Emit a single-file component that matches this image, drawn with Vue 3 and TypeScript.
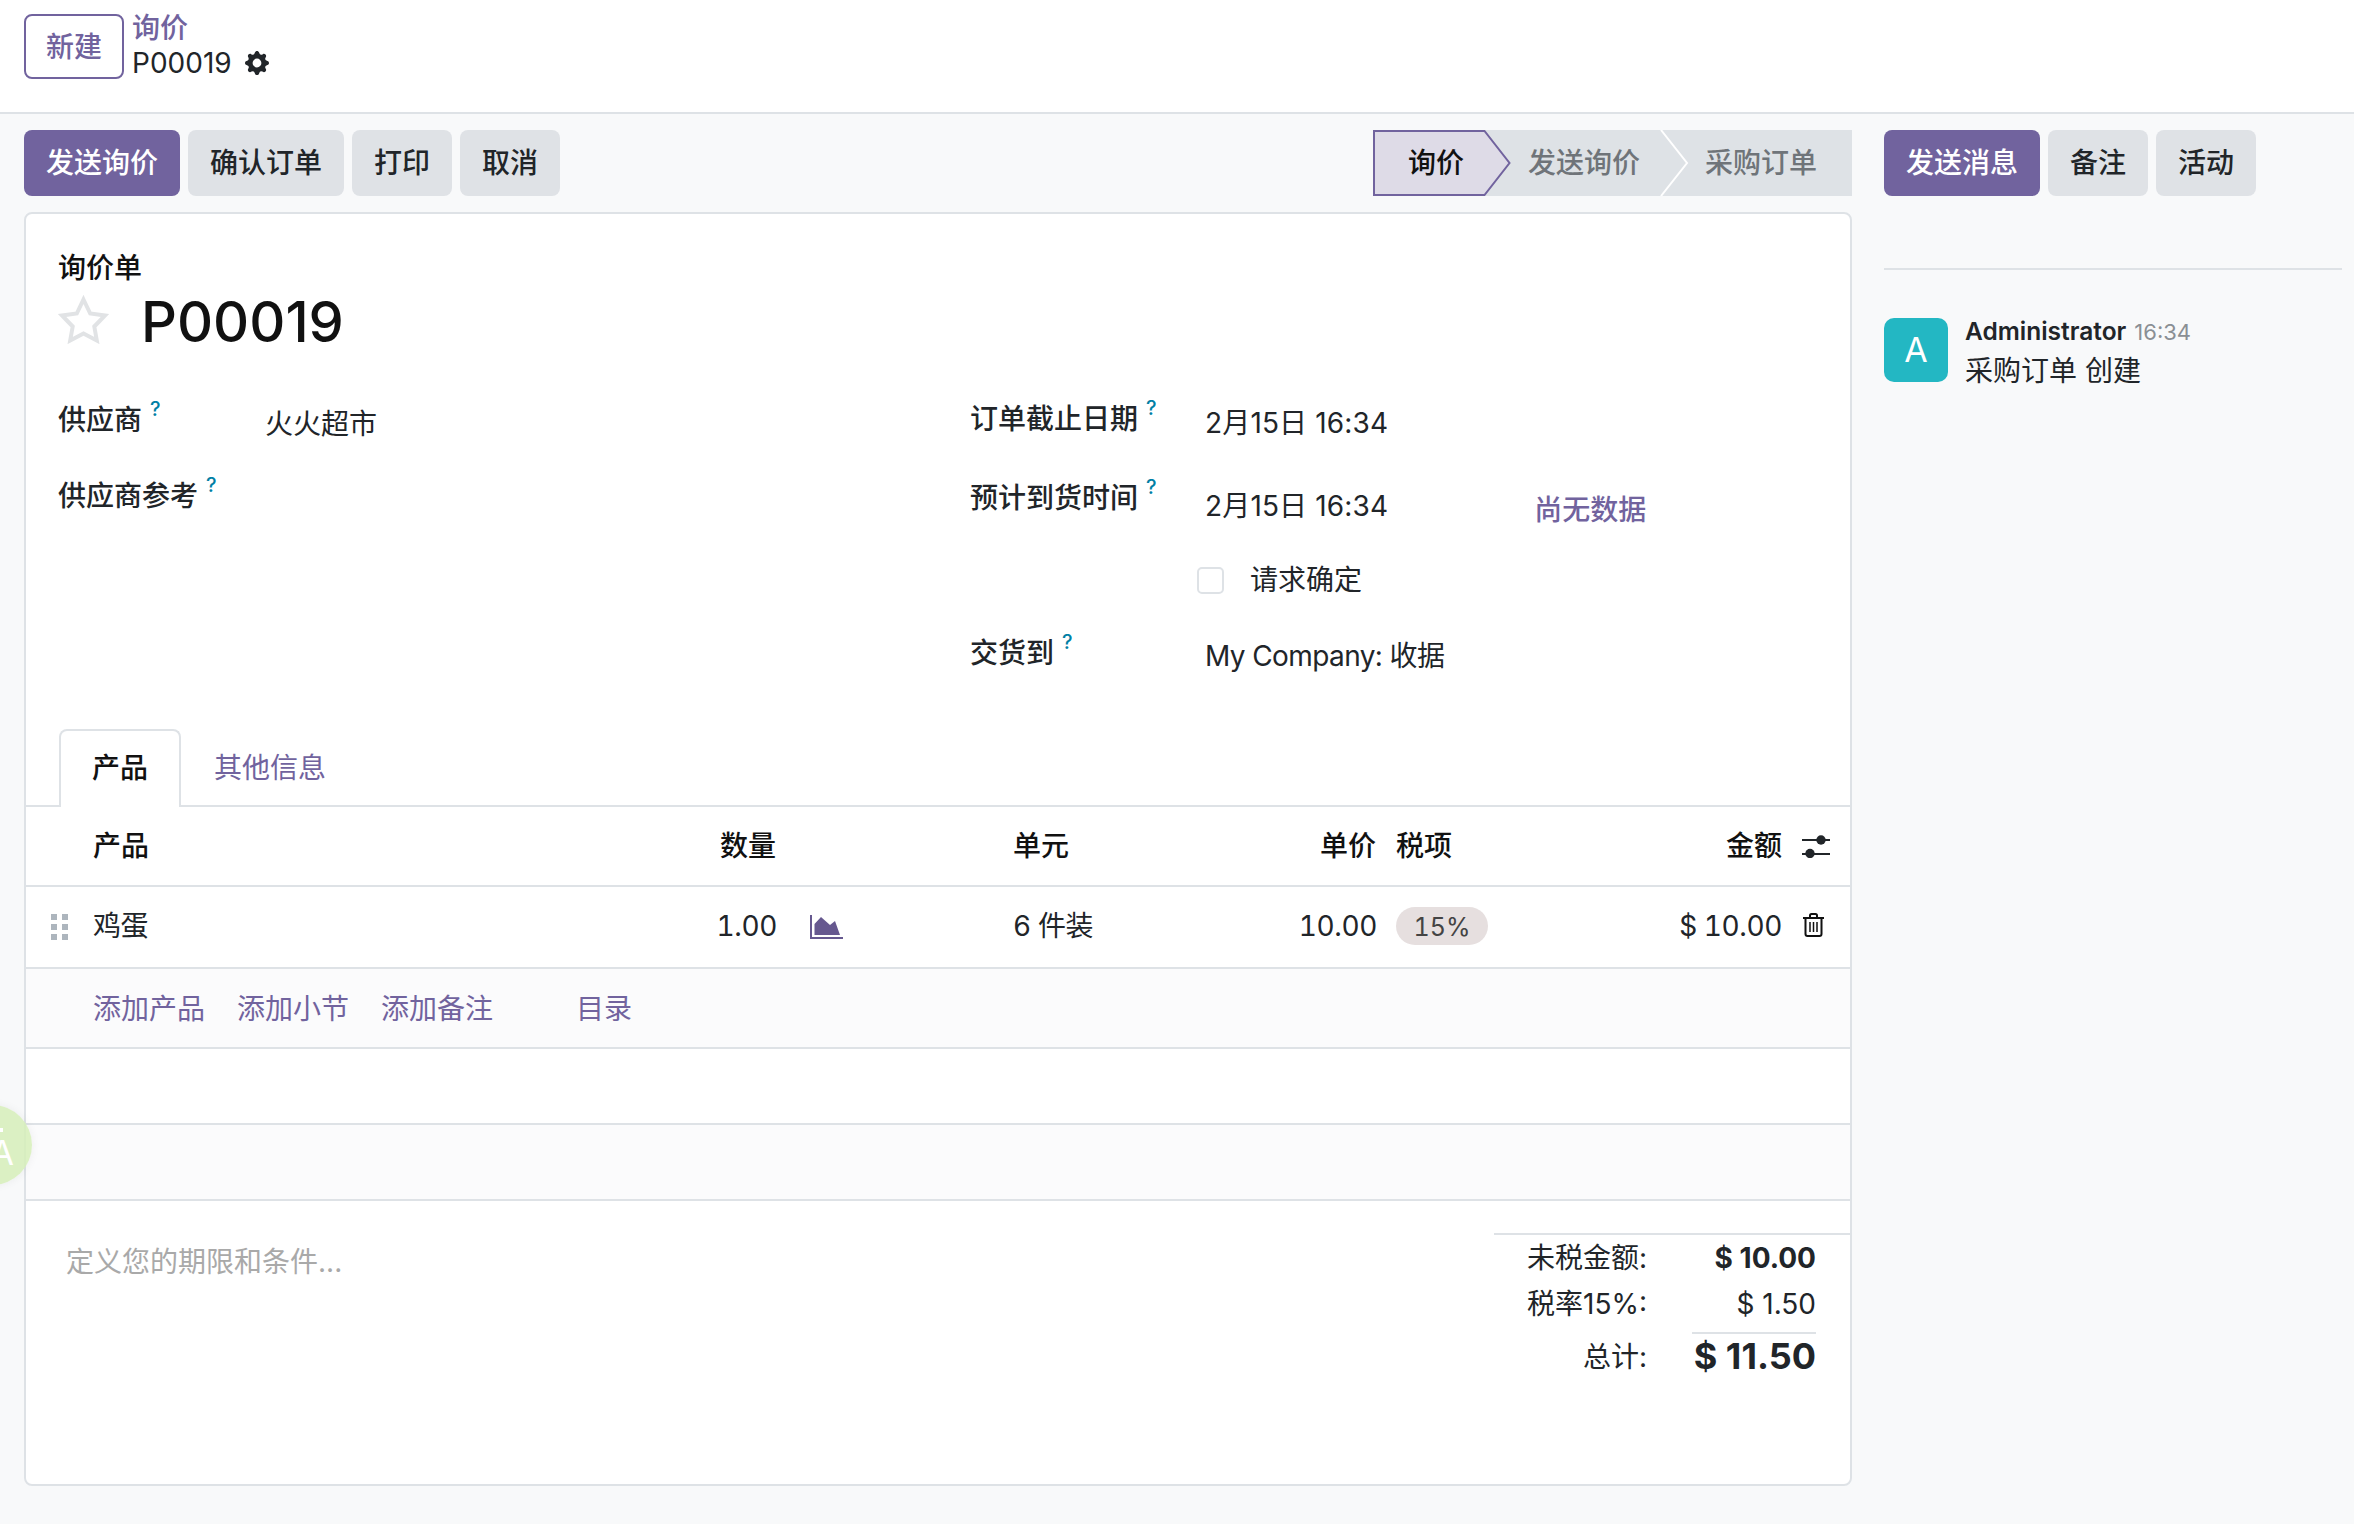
<script setup lang="ts">
const actions = [
  { label: '发送询价', primary: true },
  { label: '确认订单', primary: false },
  { label: '打印', primary: false },
  { label: '取消', primary: false }
]
const chatterActions = [
  { label: '发送消息', primary: true },
  { label: '备注', primary: false },
  { label: '活动', primary: false }
]
const addLinks = ['添加产品', '添加小节', '添加备注']
</script>

<template>
  <div class="app">
    <header class="topbar">
      <button class="btn btn-new">新建</button>
      <div class="crumbs">
        <a class="crumb-link">询价</a>
        <div class="crumb-current">
          <span>P00019</span>
          <svg class="gear" viewBox="0 0 16 16"><path fill-rule="evenodd" d="M9.405 1.05c-.413-1.4-2.397-1.4-2.81 0l-.1.34a1.464 1.464 0 0 1-2.105.872l-.31-.17c-1.283-.698-2.686.705-1.987 1.987l.169.311c.446.82.023 1.841-.872 2.105l-.34.1c-1.4.413-1.4 2.397 0 2.81l.34.1a1.464 1.464 0 0 1 .872 2.105l-.17.31c-.698 1.283.705 2.686 1.987 1.987l.311-.169a1.464 1.464 0 0 1 2.105.872l.1.34c.413 1.4 2.397 1.4 2.81 0l.1-.34a1.464 1.464 0 0 1 2.105-.872l.31.17c1.283.698 2.686-.705 1.987-1.987l-.169-.311a1.464 1.464 0 0 1 .872-2.105l.34-.1c1.4-.413 1.4-2.397 0-2.81l-.34-.1a1.464 1.464 0 0 1-.872-2.105l.17-.31c.698-1.283-.705-2.686-1.987-1.987l-.311.169a1.464 1.464 0 0 1-2.105-.872l-.1-.34zM8 10.93a2.929 2.929 0 1 1 0-5.86 2.929 2.929 0 0 1 0 5.858z" /></svg>
        </div>
      </div>
    </header>

    <main class="main">
      <section class="form-col">
        <div class="actions">
          <div class="btn-group">
            <button v-for="a in actions" :key="a.label" :class="['btn', a.primary ? 'btn-primary' : 'btn-secondary']">{{ a.label }}</button>
          </div>
          <div class="statusbar">
            <div class="step step-active">
              询价
              <svg class="arrow" viewBox="0 0 29 66"><path d="M0 1H2L27 33 2 65H0Z" fill="#dedbe7" stroke="none" /><path d="M0 1H1.500L26.500 33 1.500 65H0" fill="none" stroke="#71639e" stroke-width="2" /></svg>
            </div>
            <div class="step step-mid">
              发送询价
              <svg class="arrow" viewBox="0 0 29 66"><path d="M1 0 27 33 1 66" fill="none" stroke="#fff" stroke-width="2" /></svg>
            </div>
            <div class="step step-last">采购订单</div>
          </div>
        </div>

        <div class="sheet">
          <div class="head">
            <div class="doc-type">询价单</div>
            <div class="title-row">
              <svg class="star" viewBox="0 0 53 50"><path d="M26.500 5.500 33.200 19.500 48 21.500 37.300 32.500 39.800 46.500 26.500 39.500 13.200 46.500 15.700 32.500 5 21.500 19.800 19.500Z" fill="none" stroke="#e1e3e5" stroke-width="4" /></svg>
              <h1 class="title">P00019</h1>
            </div>
          </div>

          <div class="form-grid">
            <div class="form-left">
              <div class="field field-a">
                <label class="label">供应商<sup class="help">?</sup></label>
                <span class="value value-a">火火超市</span>
              </div>
              <div class="field">
                <label class="label">供应商参考<sup class="help">?</sup></label>
              </div>
            </div>
            <div class="form-right">
              <div class="field field-r1">
                <label class="label label-r">订单截止日期<sup class="help">?</sup></label>
                <span class="value value-r1">2月15日 16:34</span>
              </div>
              <div class="field field-r2">
                <label class="label label-r">预计到货时间<sup class="help">?</sup></label>
                <span class="value value-r2">2月15日 16:34</span>
                <a class="no-data">尚无数据</a>
              </div>
              <div class="field field-r3">
                <span class="checkbox"></span>
                <span class="check-label">请求确定</span>
              </div>
              <div class="field">
                <label class="label label-r">交货到<sup class="help">?</sup></label>
                <span class="value value-r4">My Company: 收据</span>
              </div>
            </div>
          </div>

          <div class="tabs">
            <div class="tab tab-active">产品</div>
            <a class="tab tab-link">其他信息</a>
          </div>

          <div class="table">
            <div class="cols row-head">
              <span class="c-product">产品</span>
              <span class="c-qty">数量</span>
              <span class="c-unit">单元</span>
              <span class="c-price">单价</span>
              <span class="c-tax">税项</span>
              <span class="c-amount">金额</span>
              <svg class="c-icon sliders" viewBox="0 0 28 23">
                <path d="M0 5H28M0 19H28" stroke="#212529" stroke-width="2" />
                <circle cx="19" cy="5" r="4.700" fill="#212529" />
                <circle cx="8" cy="18.500" r="4.700" fill="#212529" />
              </svg>
            </div>
            <div class="cols row-line">
              <span class="c-handle">
                <i v-for="n in 6" :key="n"></i>
              </span>
              <span class="c-product">鸡蛋</span>
              <span class="c-qty">1.00</span>
              <svg class="c-chart" viewBox="0 0 33 24">
                <path d="M0 0H2V22H33V24H0Z" fill="#66588f" />
                <path d="M4.500 20V9L11 2 20 10 25 6 30 20Z" fill="#66588f" />
              </svg>
              <span class="c-unit">6 件装</span>
              <span class="c-price">10.00</span>
              <span class="c-tax"><span class="badge">15%</span></span>
              <span class="c-amount">$ 10.00</span>
              <svg class="c-icon trash" viewBox="0 0 21 24">
                <path d="M7 4.500V2.500Q7 1 8.500 1H12.500Q14 1 14 2.500V4.500M0 5H21M2.500 5V21Q2.500 23 4.500 23H16.500Q18.500 23 18.500 21V5" fill="none" stroke="#111" stroke-width="2" />
                <path d="M7 9V19M10.500 9V19M14 9V19" stroke="#111" stroke-width="1.500" />
              </svg>
            </div>
            <div class="row-add">
              <a v-for="l in addLinks" :key="l" class="add-link">{{ l }}</a>
              <a class="add-link catalog">目录</a>
            </div>
            <div class="row-empty"></div>
            <div class="row-empty row-tint"></div>
          </div>

          <div class="footer">
            <div class="note">定义您的期限和条件...</div>
            <div class="totals">
              <span class="t-label">未税金额:</span>
              <strong class="t-value">$ 10.00</strong>
              <span class="t-label">税率15%:</span>
              <span class="t-value">$ 1.50</span>
              <span class="t-label t-grand-label">总计:</span>
              <strong class="t-value t-grand">$ 11.50</strong>
            </div>
          </div>
        </div>
      </section>

      <aside class="chatter">
        <div class="actions">
          <div class="btn-group">
            <button v-for="a in chatterActions" :key="a.label" :class="['btn', a.primary ? 'btn-primary' : 'btn-secondary']">{{ a.label }}</button>
          </div>
        </div>
        <div class="chatter-sep"></div>
        <div class="message">
          <div class="avatar">A</div>
          <div class="msg-body">
            <div class="msg-head"><span class="author">Administrator</span><span class="time">16:34</span></div>
            <div class="msg-text">采购订单 创建</div>
          </div>
        </div>
      </aside>
    </main>

    <div class="bubble"><span class="bubble-top"></span>A</div>
  </div>
</template>

<style>
html, body {
  background: #f8f9fa;
}
</style>

<style scoped>
.app {
  position: relative;
  min-height: 1524px;
  background: #f8f9fa;
  color: #212529;
  font-family: Inter, "Noto Sans CJK SC", sans-serif;
  font-size: 28px;
  line-height: 40px;
  overflow: hidden;
}

/* top */
.topbar {
  display: flex;
  align-items: flex-start;
  height: 98px;
  padding: 14px 0 0 24px;
  background: #fff;
  border-bottom: 2px solid #dee2e6;
}
.btn {
  display: inline-flex;
  align-items: center;
  justify-content: center;
  height: 66px;
  padding: 0 22px;
  border: none;
  border-radius: 8px;
  font: inherit;
  font-weight: 500;
  cursor: pointer;
}
.btn-new {
  width: 100px;
  height: 65px;
  padding: 0;
  background: #fff;
  color: #71639e;
  border: 2px solid #71639e;
}
.btn-primary {
  background: #71639e;
  color: #fff;
}
.btn-secondary {
  background: #dfe2e6;
  color: #212529;
}
.crumbs {
  margin-left: 8px;
  margin-top: -3px;
  display: flex;
  flex-direction: column;
}
.crumb-link {
  color: #71639e;
  height: 34px;
  line-height: 34px;
  font-weight: 500;
}
.crumb-current {
  display: flex;
  align-items: center;
  gap: 13px;
  height: 36px;
}
.gear {
  width: 24px;
  height: 24px;
  fill: #212529;
}

.main {
  display: flex;
  gap: 32px;
  padding: 0 12px 0 24px;
}
.form-col {
  width: 1828px;
  flex: none;
}
.actions {
  display: flex;
  justify-content: space-between;
  padding: 16px 0;
  height: 66px;
}
.btn-group {
  display: flex;
  gap: 8px;
}

/* statusbar */
.statusbar {
  display: flex;
  height: 66px;
  background: #dee2e6;
  color: #6f7479;
  font-weight: 500;
}
.step {
  position: relative;
  line-height: 66px;
}
.step-active {
  padding: 0 18px 0 33px;
  background: #dedbe7;
  color: #111;
  border: 2px solid #71639e;
  border-right: none;
  line-height: 62px;
  z-index: 2;
  width: 110px;
  box-sizing: border-box;
}
.step-mid {
  padding: 0 20px 0 45px;
  z-index: 1;
}
.step-last {
  padding: 0 35px 0 45px;
}
.arrow {
  position: absolute;
  left: 100%;
  top: 0;
  width: 29px;
  height: 66px;
}
.step-active .arrow {
  top: -2px;
}

/* sheet */
.sheet {
  height: 1274px;
  box-sizing: border-box;
  background: #fff;
  border: 2px solid #dee2e6;
  border-radius: 8px;
  overflow: hidden;
}
.head {
  padding: 34px 32px 0;
  height: 184px;
  box-sizing: border-box;
}
.doc-type {
  color: #111;
  font-weight: 500;
}
.title-row {
  display: flex;
  align-items: center;
  height: 68px;
}
.star {
  flex: none;
  width: 53px;
  height: 50px;
  margin: -7px 0 0 -1px;
}
.title {
  margin: 0 0 0 31px;
  color: #111;
  font-size: 56px;
  line-height: 68px;
  font-weight: 500;
}
.form-grid {
  display: flex;
  height: 331px;
  padding-left: 32px;
}
.form-left {
  width: 912px;
  padding-top: 1px;
}
.field {
  display: flex;
  align-items: flex-start;
}
.field-a {
  height: 76px;
}
.field-r1 {
  height: 79px;
}
.field-r2 {
  height: 82px;
}
.field-r3 {
  height: 73px;
}
.label {
  width: 207px;
  margin-top: 1px;
  font-weight: 500;
  flex: none;
  white-space: nowrap;
}
.label-r {
  width: 235px;
}
.help {
  margin-left: 8px;
  color: #0180a5;
  font-size: 20px;
  font-weight: 500;
  line-height: 0;
  vertical-align: 14px;
}
.value-a,
.value-r1 {
  margin-top: 5px;
}
.value-r1,
.value-r2 {
  letter-spacing: 0.15px;
}
.value-r2 {
  margin-top: 9px;
}
.value-r4 {
  margin-top: 4px;
  letter-spacing: -0.6px;
}
.no-data {
  margin-left: 146px;
  margin-top: 13px;
  color: #71639e;
  font-weight: 500;
  cursor: pointer;
}
.checkbox {
  width: 27px;
  height: 27px;
  margin: 8px 0 0 227px;
  box-sizing: border-box;
  border: 2px solid #dee2e6;
  border-radius: 5px;
  background: #fff;
}
.check-label {
  margin-top: 1px;
  margin-left: 26px;
}

/* tabs */
.tabs {
  display: flex;
  height: 76px;
  padding-left: 33px;
  border-bottom: 2px solid #dee2e6;
}
.tab {
  height: 76px;
  line-height: 78px;
  padding: 0 33px;
  box-sizing: border-box;
}
.tab-link {
  color: #71639e;
  cursor: pointer;
}
.tab-active {
  width: 122px;
  height: 78px;
  padding: 0 0 0 31px;
  border: 2px solid #dee2e6;
  border-bottom: none;
  border-radius: 8px 8px 0 0;
  background: #fff;
  color: #111;
  font-weight: 500;
  line-height: 74px;
}

/* table */
.cols {
  display: grid;
  grid-template-columns: 67px 684px 236px 200px 164px 19px 100px 286px 19px 1fr;
  align-items: center;
}
.cols > * {
  grid-row: 1;
}
.row-head {
  height: 78px;
  border-bottom: 2px solid #dee2e6;
  color: #111;
  font-weight: 500;
}
.row-head .c-qty,
.row-head .c-price {
  margin-right: 1px;
}
.row-line {
  height: 77px;
  padding-bottom: 3px;
  border-bottom: 2px solid #dee2e6;
  font-variant-numeric: tabular-nums;
  letter-spacing: -0.4px;
}
.c-handle {
  grid-column: 1;
  display: grid;
  grid-template-columns: 6px 6px;
  grid-auto-rows: 6px;
  column-gap: 5px;
  row-gap: 4px;
  margin: 2px 0 0 25px;
}
.c-handle i {
  background: #adb5bd;
}
.c-product {
  grid-column: 2;
  justify-self: start;
}
.c-qty {
  grid-column: 2;
  justify-self: end;
}
.c-chart {
  grid-column: 3;
  width: 33px;
  height: 24px;
  margin: 2px 0 0 33px;
}
.c-unit { grid-column: 4; }
.c-price { grid-column: 5; justify-self: end; }
.c-tax { grid-column: 7; white-space: nowrap; }
.c-amount { grid-column: 8; justify-self: end; }
.c-icon { grid-column: 10; }
.sliders {
  width: 28px;
  height: 23px;
  margin-left: 1px;
}
.trash {
  width: 21px;
  height: 24px;
  margin: 0 0 2px 2px;
}
.badge {
  display: inline-block;
  width: 92px;
  height: 38px;
  line-height: 40px;
  text-align: center;
  background: #e6dfdf;
  border-radius: 19px;
  color: #444;
  font-size: 25px;
  letter-spacing: 0;
}
.row-add {
  display: flex;
  align-items: center;
  gap: 32px;
  height: 76px;
  padding: 2px 0 0 67px;
  background: #fbfbfc;
  border-bottom: 2px solid #dee2e6;
}
.add-link {
  color: #71639e;
  cursor: pointer;
}
.catalog {
  margin-left: 51px;
}
.row-empty {
  height: 74px;
  border-bottom: 2px solid #dee2e6;
}
.row-tint {
  background: #fbfbfc;
}

/* footer */
.footer {
  display: flex;
  justify-content: space-between;
  align-items: flex-start;
}
.note {
  margin: 41px 0 0 40px;
  color: #a9a9a9;
}
.totals {
  display: grid;
  grid-template-columns: 153px 169px;
  grid-template-rows: 42px 50px 46px;
  width: 356px;
  box-sizing: border-box;
  margin-top: 32px;
  padding: 2px 34px 0 0;
  border-top: 2px solid #dee2e6;
  align-items: center;
}
.t-label,
.t-value {
  text-align: right;
  white-space: nowrap;
}
.t-label {
  justify-self: end;
}
.t-value {
  font-weight: 400;
}
strong.t-value {
  font-weight: 700;
}
.t-grand-label {
  margin-top: 10px;
}
.t-grand {
  justify-self: end;
  width: 124px;
  margin-top: 10px;
  height: 48px;
  line-height: 44px;
  border-top: 2px solid #dee2e6;
  font-size: 36px;
}

/* chatter */
.chatter {
  width: 458px;
  flex: none;
}
.chatter-sep {
  margin-top: 56px;
  border-top: 2px solid #dee2e6;
}
.message {
  display: flex;
  gap: 17px;
  margin-top: 48px;
}
.avatar {
  flex: none;
  width: 64px;
  height: 64px;
  border-radius: 10px;
  background: #23b7c3;
  color: #fff;
  text-align: center;
  font-size: 34px;
  line-height: 64px;
}
.msg-head {
  display: flex;
  align-items: baseline;
  gap: 8px;
  height: 26px;
  line-height: 26px;
}
.author {
  font-size: 24.5px;
  font-weight: 600;
}
.time {
  font-size: 22px;
  color: #8a8f94;
}
.msg-text {
  margin-top: 7px;
}

/* floating bubble over the sheet edge */
.bubble {
  position: absolute;
  left: -48px;
  top: 1105px;
  width: 80px;
  height: 80px;
  border-radius: 50%;
  background: rgba(214, 238, 184, 0.85);
  box-shadow: 0 0 10px rgba(0, 0, 0, 0.06);
  color: #fff;
  font-size: 34px;
  line-height: 96px;
  text-align: right;
  padding-right: 18px;
  box-sizing: border-box;
}
.bubble-top {
  position: absolute;
  left: 48px;
  top: 23px;
  width: 3px;
  height: 4px;
  background: #fff;
}
</style>
